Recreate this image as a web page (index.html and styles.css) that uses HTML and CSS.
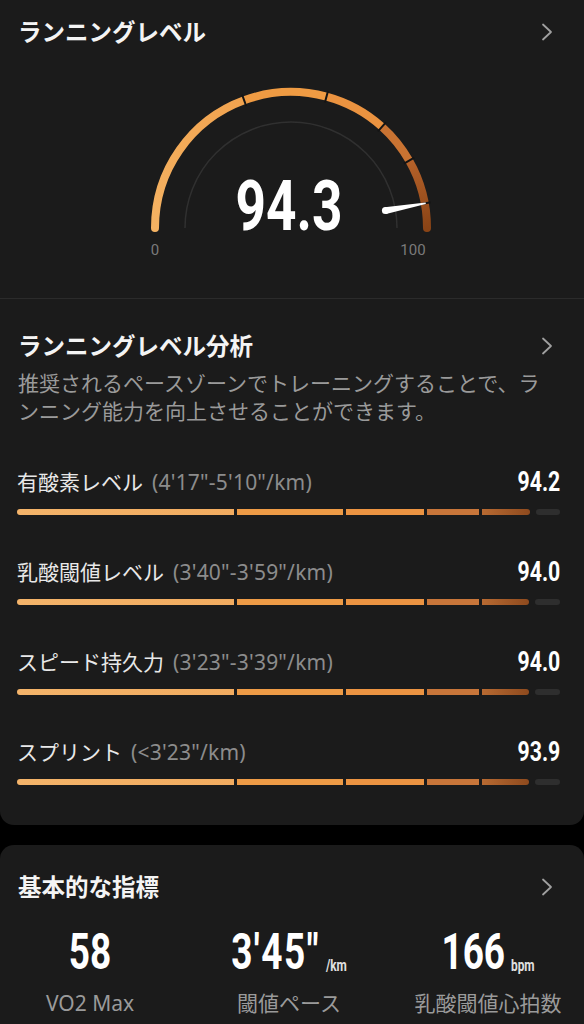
FILE: index.html
```html
<!DOCTYPE html>
<html lang="ja">
<head>
  <meta charset="UTF-8" />
  <meta name="viewport" content="width=device-width, initial-scale=1.0"/>
  <title>ランニングレベル</title>
  <link rel="stylesheet" href="styles.css">
</head>
<body>
  <div class="card card-top">
    <section class="panel gauge-panel">
      <div class="head">
        <h2>ランニングレベル</h2>
        <svg class="chev" viewBox="0 0 12 18"><path d="M2 1.5 L10 9 L2 16.5"/></svg>
      </div>
      <svg class="gauge" viewBox="0 0 300 180" width="300" height="180">
        <defs>
          <linearGradient id="g5" gradientUnits="userSpaceOnUse" x1="267" y1="72" x2="285" y2="140">
            <stop offset="0" stop-color="#b6622a"/>
            <stop offset="1" stop-color="#8a4416"/>
          </linearGradient>
          <linearGradient id="g1" gradientUnits="userSpaceOnUse" x1="13" y1="140" x2="102" y2="12">
            <stop offset="0" stop-color="#f5b363"/>
            <stop offset="1" stop-color="#f1a34f"/>
          </linearGradient>
        </defs>
        <path class="inner" d="M43 140 A106 106 0 0 1 255 140"/>
        <path class="seg round" stroke="url(#g1)" d="M13 140 A136 136 0 0 1 102.1 12.3"/>
        <path class="seg round" stroke="url(#g5)" d="M267.1 72.6 A136 136 0 0 1 285 140"/>
        <path class="seg" stroke="#ef9b43" d="M102.1 12.3 A136 136 0 0 1 184.5 8.7"/>
        <path class="seg" stroke="#eb9340" d="M184.5 8.7 A136 136 0 0 1 239.9 38.8"/>
        <path class="seg" stroke="#c97332" d="M239.9 38.8 A136 136 0 0 1 267.1 72.6"/>
        <line class="tick" x1="104.2" y1="18.0" x2="100.1" y2="6.7"/>
        <line class="tick" x1="182.9" y1="14.5" x2="186.0" y2="2.9"/>
        <line class="tick" x1="235.9" y1="43.3" x2="243.9" y2="34.3"/>
        <line class="tick" x1="261.9" y1="75.6" x2="272.3" y2="69.6"/>
        <line class="tick" x1="276.8" y1="116.4" x2="288.6" y2="114.3"/>
        <path class="needle" d="M244.0 126.0 L283.8 116.0 L283.6 114.4 L242.8 119.2 Z"/>
        <circle class="needle" cx="243.4" cy="122.6" r="3.5"/>
        <text class="big" transform="translate(147 142) scale(0.76 1)">94.3</text>
        <text class="end" x="13" y="167">0</text>
        <text class="end" x="271" y="167">100</text>
      </svg>
    </section>

    <section class="panel zones-panel">
      <div class="head">
        <h2>ランニングレベル分析</h2>
        <svg class="chev" viewBox="0 0 12 18"><path d="M2 1.5 L10 9 L2 16.5"/></svg>
      </div>
      <p class="desc">推奨されるペースゾーンでトレーニングすることで、ランニング能力を向上させることができます。</p>

      <div class="zone">
        <div class="zone-row">
          <span class="zone-name">有酸素レベル<span class="pace">(4'17"-5'10"/km)</span></span>
          <span class="score"><span>94.2</span></span>
        </div>
        <div class="bar">
          <i class="s1"></i><i class="s2"></i><i class="s3"></i><i class="s4"></i>
          <span class="s5"><i class="fill" style="width: 61.5%"></i><i class="rest"></i></span>
        </div>
      </div>

      <div class="zone">
        <div class="zone-row">
          <span class="zone-name">乳酸閾値レベル<span class="pace">(3'40"-3'59"/km)</span></span>
          <span class="score"><span>94.0</span></span>
        </div>
        <div class="bar">
          <i class="s1"></i><i class="s2"></i><i class="s3"></i><i class="s4"></i>
          <span class="s5"><i class="fill" style="width: 60.5%"></i><i class="rest"></i></span>
        </div>
      </div>

      <div class="zone">
        <div class="zone-row">
          <span class="zone-name">スピード持久力<span class="pace">(3'23"-3'39"/km)</span></span>
          <span class="score"><span>94.0</span></span>
        </div>
        <div class="bar">
          <i class="s1"></i><i class="s2"></i><i class="s3"></i><i class="s4"></i>
          <span class="s5"><i class="fill" style="width: 60.5%"></i><i class="rest"></i></span>
        </div>
      </div>

      <div class="zone">
        <div class="zone-row">
          <span class="zone-name">スプリント<span class="pace">(&lt;3'23"/km)</span></span>
          <span class="score"><span>93.9</span></span>
        </div>
        <div class="bar">
          <i class="s1"></i><i class="s2"></i><i class="s3"></i><i class="s4"></i>
          <span class="s5"><i class="fill" style="width: 60%"></i><i class="rest"></i></span>
        </div>
      </div>
    </section>
  </div>

  <div class="card card-bottom">
    <section class="panel basics-panel">
      <div class="head">
        <h2>基本的な指標</h2>
        <svg class="chev" viewBox="0 0 12 18"><path d="M2 1.5 L10 9 L2 16.5"/></svg>
      </div>
      <div class="metrics">
        <div class="metric">
          <div class="num"><span class="digits">58</span></div>
          <div class="label">VO2 Max</div>
        </div>
        <div class="metric">
          <div class="num"><span class="digits wide">3'45"</span><span class="unit">/km</span></div>
          <div class="label">閾値ペース</div>
        </div>
        <div class="metric">
          <div class="num"><span class="digits">166</span><span class="unit">bpm</span></div>
          <div class="label">乳酸閾値心拍数</div>
        </div>
      </div>
    </section>
  </div>
</body>
</html>
```

FILE: styles.css
```css
body {
  margin: 0;
  background: #000;
  color: #f2f2f2;
  font-family: "Noto Sans", "Noto Sans CJK JP", sans-serif;
}
.card {
  background: #1b1b1b;
}
.card-top {
  border-radius: 0 0 14px 14px;
}
.card-bottom {
  margin-top: 20px;
  border-radius: 14px 14px 0 0;
  height: 179px;
}
.head {
  display: flex;
  justify-content: space-between;
  align-items: center;
  padding: 0 31px 0 18px;
  height: 32px;
}
.head h2 {
  margin: 0;
  font-size: 23.5px;
  font-weight: 700;
  color: #f4f4f4;
  line-height: 32px;
}
.chev {
  width: 12px;
  height: 18px;
}
.chev path {
  fill: none;
  stroke: #a0a0a0;
  stroke-width: 1.8;
  stroke-linecap: round;
  stroke-linejoin: round;
}

/* gauge */
.gauge-panel {
  padding: 16px 0 30px;
  border-bottom: 1px solid #2b2b2b;
}
.gauge {
  display: block;
  margin: 40px auto 0;
  overflow: visible;
}
.gauge .inner {
  fill: none;
  stroke: #303030;
  stroke-width: 1.5;
}
.gauge .seg {
  fill: none;
  stroke-width: 8;
}
.gauge .seg.round {
  stroke-linecap: round;
}
.gauge .tick {
  stroke: #141414;
  stroke-width: 2;
}
.gauge .needle {
  fill: #fff;
}
.gauge .big {
  font-family: Roboto, sans-serif;
  font-weight: 700;
  font-size: 70px;
  fill: #fff;
  text-anchor: middle;
}
.gauge .end {
  font-family: Roboto, sans-serif;
  font-size: 15px;
  fill: #7a7a7a;
  text-anchor: middle;
}

/* zones */
.zones-panel {
  padding: 31px 0 40px;
}
.desc {
  margin: 7px 0 0;
  padding: 0 18px;
  max-width: 530px;
  font-size: 21px;
  line-height: 28px;
  color: #9a9a9a;
}
.zone {
  margin-top: 42px;
  padding: 0 24px 0 17px;
}
.zone-row {
  display: flex;
  justify-content: space-between;
  align-items: center;
  height: 28px;
}
.zone-name {
  font-size: 21px;
  color: #e8e8e8;
}
.pace {
  margin-left: 9px;
  color: #8c8c8c;
  letter-spacing: 0.2px;
}
.score span {
  display: inline-block;
  font-family: Roboto, sans-serif;
  font-weight: 700;
  font-size: 28px;
  color: #fff;
  transform: scaleX(0.76);
  transform-origin: right center;
}
.bar {
  display: flex;
  gap: 3px;
  height: 6px;
  margin-top: 14px;
}
.bar i {
  display: block;
  height: 100%;
}
.bar .s1 {
  flex: 217;
  background: linear-gradient(90deg, #f4b46a, #f2ac60);
  border-radius: 3px 0 0 3px;
}
.bar .s2 {
  flex: 105;
  background: #ee9b46;
}
.bar .s3 {
  flex: 78;
  background: #ec9442;
}
.bar .s4 {
  flex: 52;
  background: #c8763a;
}
.bar .s5 {
  flex: 78;
  display: flex;
  gap: 6px;
}
.bar .fill {
  background: linear-gradient(90deg, #b86a32, #8e4a1e);
  border-radius: 0 3px 3px 0;
}
.bar .rest {
  flex: 1;
  background: #2e2e2e;
  border-radius: 3px;
}

/* basics */
.basics-panel {
  padding-top: 26px;
}
.metrics {
  display: grid;
  grid-template-columns: repeat(3, 180px);
  column-gap: 19px;
  margin-top: 24px;
}
.metric {
  text-align: center;
}
.num {
  height: 50px;
  line-height: 50px;
  white-space: nowrap;
  font-family: Roboto, sans-serif;
  font-weight: 700;
  transform: scaleX(0.74);
}
.num .digits {
  font-size: 50px;
  color: #fff;
}
.num .digits.wide {
  letter-spacing: 2px;
}
.num .unit {
  display: inline-block;
  font-size: 16px;
  color: #e0e0e0;
  margin-left: 8px;
  vertical-align: -2px;
}
.label {
  margin-top: 12px;
  font-size: 21px;
  line-height: 28px;
  color: #9a9a9a;
}
```
